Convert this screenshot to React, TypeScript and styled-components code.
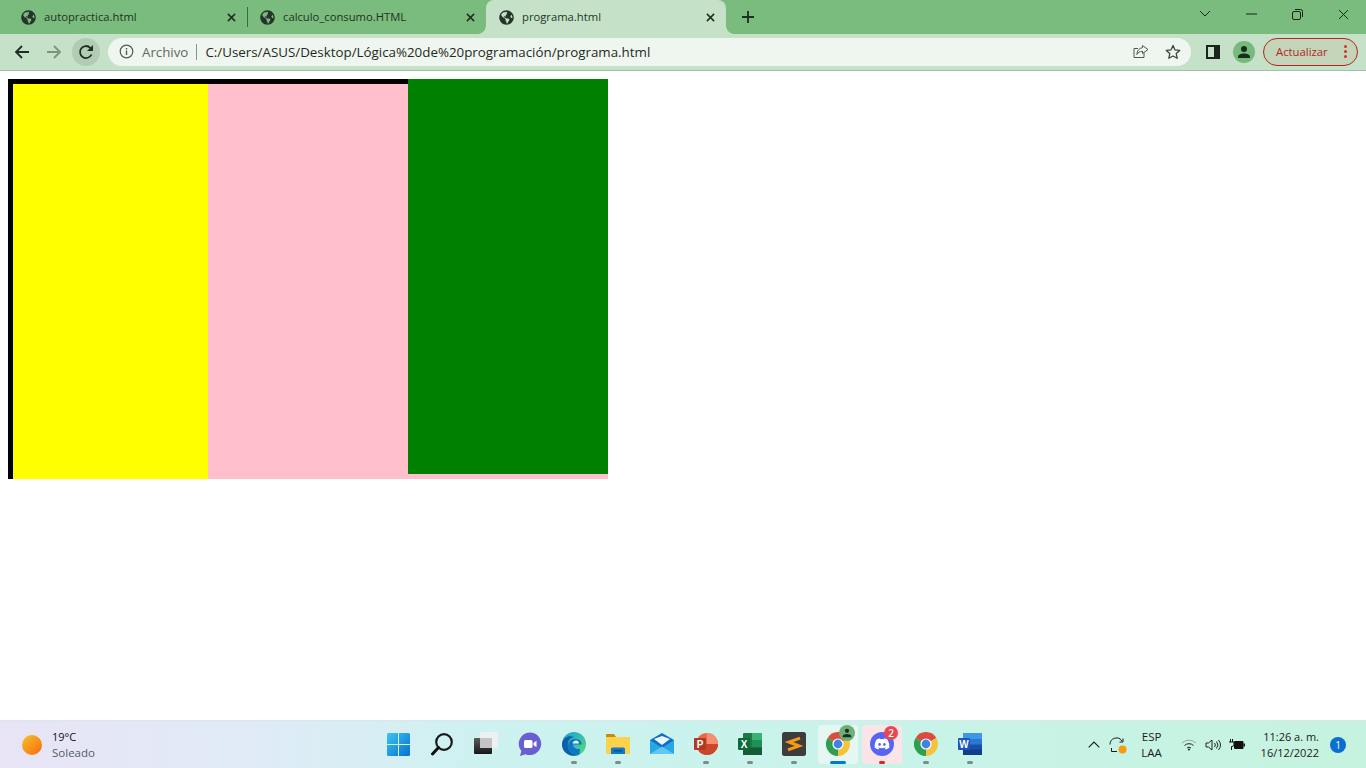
import React from 'react'
import styled, { createGlobalStyle } from 'styled-components'
import { FaDiscord, FaGlobeAmericas } from 'react-icons/fa'

const GlobalStyle = createGlobalStyle`
  html, body { margin: 0; padding: 0; height: 100%; overflow: hidden; background: #fff; }
  body { font-family: "Open Sans", "Noto Sans", sans-serif; }
`

const Screen = styled.div`
  display: flex;
  flex-direction: column;
  width: 1366px;
  height: 768px;
`

/* browser chrome */
const TabStrip = styled.div`
  display: flex;
  height: 34px;
  padding-left: 8px;
  background: #7abb7e;
  flex-shrink: 0;
`

const Tab = styled.div<{ $active?: boolean; $divider?: boolean }>`
  position: relative;
  display: flex;
  align-items: center;
  box-sizing: border-box;
  width: ${p => (p.$active ? 240 : 239)}px;
  padding: 0 11px 0 13px;
  color: ${p => (p.$active ? '#243527' : '#1f3322')};
  background: ${p => (p.$active ? '#c5e1c7' : 'transparent')};
  border-radius: ${p => (p.$active ? '8px 8px 0 0' : '0')};
  &::after {
    content: '';
    display: ${p => (p.$divider ? 'block' : 'none')};
    position: absolute;
    right: -1px;
    top: 7px;
    width: 1px;
    height: 20px;
    background: #40664a;
  }
`

const TabCorner = styled.span<{ $side: 'left' | 'right' }>`
  position: absolute;
  bottom: 0;
  ${p => p.$side}: -8px;
  width: 8px;
  height: 8px;
  background: radial-gradient(circle at ${p => (p.$side === 'left' ? '0 0' : '100% 0')}, #7abb7e 7.5px, #c5e1c7 8px);
`

const TabTitle = styled.span`
  flex: 1;
  margin: 0 0 1px 8px;
  font-size: 11.25px;
  white-space: nowrap;
`

const NewTab = styled.button`
  display: flex;
  align-items: center;
  justify-content: center;
  width: 28px;
  height: 28px;
  margin: 3px 0 0 8px;
  padding: 0;
  border: 0;
  background: none;
`

const WindowControls = styled.div`
  display: flex;
  margin-left: auto;
`

const WindowButton = styled.div`
  display: flex;
  align-items: center;
  justify-content: center;
  width: 46px;
  height: 28px;
`

const Toolbar = styled.div`
  display: flex;
  align-items: center;
  box-sizing: border-box;
  height: 37px;
  padding: 0 8px 1px;
  gap: 4px;
  background: #c5e1c7;
  border-bottom: 1px solid #a5bea7;
  flex-shrink: 0;
`

const NavButton = styled.div<{ $hover?: boolean }>`
  display: flex;
  align-items: center;
  justify-content: center;
  width: 28px;
  height: 28px;
  border-radius: 50%;
  background: ${p => (p.$hover ? '#b1ccb3' : 'transparent')};
`

const PanelButton = styled(NavButton)`
  margin-right: -1px;
`

const Omnibox = styled.div`
  display: flex;
  align-items: center;
  flex: 1;
  height: 28px;
  margin: 0 4px;
  padding: 0 2px 0 11px;
  border-radius: 14px;
  background: #eff6f0;
`

const Scheme = styled.span`
  margin-left: 8px;
  padding-right: 8px;
  border-right: 1px solid #8a948c;
  color: #5f6863;
  font-size: 13.3px;
  line-height: 16px;
`

const Address = styled.span`
  flex: 1;
  margin-left: 8px;
  color: #1f2a22;
  font-size: 13.35px;
  line-height: 16px;
  white-space: nowrap;
`

const OmniAction = styled.span`
  display: flex;
  justify-content: center;
  width: 32px;
`

const Avatar = styled.span`
  display: flex;
  align-items: center;
  justify-content: center;
  width: 22px;
  height: 22px;
  border-radius: 50%;
  background: #78b97e;
`

const UpdatePill = styled.div`
  display: flex;
  align-items: center;
  justify-content: space-between;
  box-sizing: border-box;
  width: 95px;
  height: 28px;
  margin-left: 1px;
  padding: 0 10px 0 12px;
  border: 1px solid #b3261e;
  border-radius: 14px;
  background: #c3d4b8;
  color: #b3261e;
  font-size: 11.3px;
`

const MenuDots = styled.span`
  display: flex;
  flex-direction: column;
  gap: 2px;
  span { width: 3px; height: 3px; border-radius: 50%; background: #d93025; }
`

/* page body */
const Viewport = styled.main`
  flex: 1;
  box-sizing: border-box;
  padding: 8px;
  background: #fff;
`

const Stage = styled.div`
  display: flex;
  width: 600px;
  height: 400px;
  background: pink;
`

const Frame = styled.div`
  display: flex;
  box-sizing: border-box;
  width: 400px;
  height: 400px;
  border-top: 5px solid #000;
  border-left: 5px solid #000;
`

const YellowBlock = styled.div`
  width: 195px;
  background: #ff0;
`

const PinkBlock = styled.div`
  width: 200px;
  background: pink;
`

const GreenBlock = styled.div`
  width: 200px;
  height: 395px;
  background: green;
`

/* windows taskbar */
const Taskbar = styled.footer`
  display: grid;
  grid-template-columns: 378px auto 1fr;
  height: 48px;
  box-sizing: border-box;
  border-top: 1px solid #dbe7ea;
  background: linear-gradient(90deg, #e8e4f5 0%, #e0eaf7 18%, #cdf2f0 36%, #c9f3ea 60%, #c6f3df 100%);
  flex-shrink: 0;
`

const Weather = styled.div`
  display: flex;
  align-items: center;
  padding-left: 22px;
`

const Sun = styled.span`
  width: 20px;
  height: 20px;
  border-radius: 50%;
  background: linear-gradient(135deg, #f7c02e, #f56b0a);
`

const WeatherText = styled.div`
  display: flex;
  flex-direction: column;
  margin-left: 10px;
  font-size: 11px;
  line-height: 16px;
  color: #111;
  small { font-size: 11.5px; color: #555c66; }
`

const Pinned = styled.div`
  display: flex;
  align-items: center;
  gap: 4px;
`

const Tile = styled.div<{ $tint?: string }>`
  position: relative;
  display: flex;
  align-items: center;
  justify-content: center;
  box-sizing: border-box;
  width: 40px;
  height: 39px;
  padding-bottom: 1px;
  border-radius: 4px;
  background: ${p => p.$tint || 'transparent'};
`

const RunDot = styled.span<{ $color?: string; $wide?: boolean }>`
  position: absolute;
  left: 50%;
  bottom: 0;
  width: ${p => (p.$wide ? 16 : 6)}px;
  height: 3px;
  margin-left: ${p => (p.$wide ? -8 : -3)}px;
  border-radius: 2px;
  background: ${p => p.$color || '#7c8a8b'};
`

const Badge = styled.span<{ $color: string }>`
  position: absolute;
  top: 1px;
  right: 4px;
  display: flex;
  align-items: center;
  justify-content: center;
  width: 14px;
  height: 14px;
  border-radius: 50%;
  background: ${p => p.$color};
  color: #fff;
  font-size: 10px;
  font-weight: 600;
`

const Tray = styled.div`
  display: flex;
  align-items: center;
  justify-content: flex-end;
  padding-right: 20px;
`

const TrayIcon = styled.span<{ $width: number }>`
  display: flex;
  justify-content: center;
  width: ${p => p.$width}px;
`

const Lang = styled.div`
  display: flex;
  flex-direction: column;
  align-items: center;
  width: 44px;
  margin-right: 3px;
  font-size: 11.5px;
  line-height: 16px;
  color: #1a1a1a;
`

const Clock = styled.div`
  display: flex;
  flex-direction: column;
  align-items: flex-end;
  margin-left: 12px;
  font-size: 11px;
  line-height: 16px;
  color: #1a1a1a;
  white-space: nowrap;
`

const Notification = styled.span`
  display: flex;
  align-items: center;
  justify-content: center;
  width: 16px;
  height: 16px;
  margin-left: 11px;
  border-radius: 50%;
  background: #0a6fd0;
  color: #fff;
  font-size: 10px;
`

/* icons */
const CloseGlyph = ({ size = 9, color = '#202d23', width = 1.7 }) => (
  <svg width={size} height={size} viewBox="0 0 10 10">
    <path d="M1 1l8 8M9 1L1 9" stroke={color} strokeWidth={width} fill="none" />
  </svg>
)

const ChromeLogo = () => (
  <svg width="24" height="24" viewBox="0 0 24 24">
    <path d="M12 12L1.6 6A12 12 0 0 1 22.39 6z" fill="#dc4c3e" />
    <path d="M12 12L22.39 6A12 12 0 0 1 12 24z" fill="#f5c33b" />
    <path d="M12 12L12 24A12 12 0 0 1 1.6 6z" fill="#2f9e50" />
    <circle cx="12" cy="12" r="5.6" fill="#fff" />
    <circle cx="12" cy="12" r="4.4" fill="#3f83e6" />
  </svg>
)

const StartIcon = () => (
  <svg width="23" height="23" viewBox="0 0 23 23">
    <defs>
      <linearGradient id="startFill" x1="0" y1="0" x2="1" y2="1">
        <stop offset="0" stopColor="#3cc4f5" />
        <stop offset="1" stopColor="#0670cf" />
      </linearGradient>
    </defs>
    <path d="M1.5 0H11v11H0V1.5A1.5 1.5 0 0 1 1.5 0zM12 0h9.5A1.5 1.5 0 0 1 23 1.5V11H12zM0 12h11v11H1.5A1.5 1.5 0 0 1 0 21.500zM12 12h11v9.500a1.500 1.500 0 0 1-1.500 1.500H12z" fill="url(#startFill)" />
  </svg>
)

const SearchIcon = () => (
  <svg width="24" height="24" viewBox="0 0 24 24" fill="none">
    <circle cx="14" cy="10" r="7.800" stroke="#1a1a1a" strokeWidth="2.200" />
    <path d="M8.500 15.500L2.500 22" stroke="#111" strokeWidth="3" strokeLinecap="round" />
  </svg>
)

const TaskViewIcon = () => (
  <svg width="24" height="24" viewBox="0 0 24 24">
    <defs>
      <linearGradient id="taskFront" x1="0" y1="0" x2="0" y2="1">
        <stop offset="0" stopColor="#5c5c5c" />
        <stop offset="1" stopColor="#161616" />
      </linearGradient>
    </defs>
    <rect x="6" y="0" width="18" height="16" rx="1" fill="#eef1f1" />
    <rect x="0" y="6" width="18" height="16" rx="1" fill="url(#taskFront)" />
    <rect x="6" y="6" width="12" height="10" fill="#c4c4c4" />
  </svg>
)

const ChatIcon = () => (
  <svg width="24" height="24" viewBox="0 0 24 24">
    <path d="M12 .5a11.300 11.300 0 1 1-4.500 21.700L2 24l1.400-5A11.300 11.300 0 0 1 12 .5z" fill="#6a5fd0" />
    <rect x="6" y="8" width="8.500" height="8" rx="1.500" fill="#fff" />
    <path d="M15.500 11l3-2.200v6.400l-3-2.200z" fill="#fff" />
  </svg>
)

const EdgeIcon = () => (
  <svg width="24" height="24" viewBox="0 0 24 24">
    <defs>
      <linearGradient id="edgeTop" x1="0" y1="0" x2="1" y2="1">
        <stop offset="0" stopColor="#1b9de2" />
        <stop offset="1" stopColor="#55df70" />
      </linearGradient>
    </defs>
    <circle cx="12" cy="12" r="12" fill="url(#edgeTop)" />
    <path d="M0 12C1 5 7 3 12 5c-5 1-7 5-6 10s5 9 12 7c-6 4-18 1-18-10z" fill="#0c5ea8" />
    <path d="M6 14c0-5 4-7.500 8-7s6 3 5.500 5.500H11c0 3 3 5 7 4.500l-.5 5C11 24 6 20 6 14z" fill="#0f76c6" />
    <path d="M10.500 11.500c.5-2 2-3 3.500-3s3 1 3 3z" fill="#e8f7f7" />
  </svg>
)

const FolderIcon = () => (
  <svg width="24" height="24" viewBox="0 0 24 24">
    <path d="M0 3a1 1 0 0 1 1-1h7l2 3H0z" fill="#c98a06" />
    <path d="M0 5h23a1 1 0 0 1 1 1v15a1 1 0 0 1-1 1H1a1 1 0 0 1-1-1z" fill="#fbd24e" />
    <path d="M5 22v-5a1.500 1.500 0 0 1 1.500-1.500h11A1.500 1.500 0 0 1 19 17v5z" fill="#0f78c8" />
    <rect x="8" y="18" width="8" height="1.500" fill="#0a4f91" />
  </svg>
)

const MailIcon = () => (
  <svg width="24" height="24" viewBox="0 0 24 24">
    <path d="M0 8L12 1l12 7v14H0z" fill="#0f6fc0" />
    <path d="M4 7l8-3 8 3-8 6z" fill="#eef7fb" />
    <path d="M0 8l12 8 12-8v14H0z" fill="#29a7e5" />
    <path d="M0 22l12-7.500L24 22z" fill="#62c6f2" />
  </svg>
)

const OfficeMark = ({ color }: { color: string }) => (
  <rect x="0" y="6" width="12" height="12" rx="1" fill={color} />
)

const OfficeLetter = ({ children }: { children: string }) => (
  <text x="6" y="16" textAnchor="middle" fontSize="10" fontWeight="700" fill="#fff" fontFamily="Liberation Sans, sans-serif">{children}</text>
)

const PowerPointIcon = () => (
  <svg width="24" height="24" viewBox="0 0 24 24">
    <circle cx="13" cy="12" r="11" fill="#e8694a" />
    <path d="M13 1a11 11 0 0 1 11 11H13z" fill="#f58f70" />
    <path d="M13 12h11a11 11 0 0 1-11 11 11 11 0 0 1-8-3.500V12z" fill="#c9472b" />
    <OfficeMark color="#b7371c" />
    <OfficeLetter>P</OfficeLetter>
  </svg>
)

const ExcelIcon = () => (
  <svg width="24" height="24" viewBox="0 0 24 24">
    <rect x="5" y="1" width="19" height="22" rx="1" fill="#1b7a47" />
    <rect x="14" y="1" width="10" height="7" fill="#36b374" />
    <rect x="14" y="8" width="10" height="7.500" fill="#1f9158" />
    <rect x="5" y="15.500" width="19" height="7.500" fill="#125c37" />
    <OfficeMark color="#0f6a3a" />
    <OfficeLetter>X</OfficeLetter>
  </svg>
)

const WordIcon = () => (
  <svg width="24" height="24" viewBox="0 0 24 24">
    <rect x="5" y="1" width="19" height="22" rx="1" fill="#1a4fa5" />
    <rect x="5" y="1" width="19" height="6" fill="#3f97e8" />
    <rect x="5" y="7" width="19" height="5.500" fill="#2a78d4" />
    <rect x="5" y="17.500" width="19" height="5.500" fill="#123d8c" />
    <OfficeMark color="#1b57b8" />
    <OfficeLetter>W</OfficeLetter>
  </svg>
)

const SublimeIcon = () => (
  <svg width="24" height="24" viewBox="0 0 24 24">
    <rect width="24" height="24" rx="2.500" fill="#3d3d3d" />
    <path d="M18 6.200L7 10l10 4-11 3.800" fill="none" stroke="#f79a13" strokeWidth="3" />
  </svg>
)

const PersonGlyph = ({ size = 14, color = '#16301d' }) => (
  <svg width={size} height={size} viewBox="0 0 14 14">
    <circle cx="7" cy="4" r="3" fill={color} />
    <path d="M1 13v-1.500C1 9.500 4.500 8.500 7 8.500s6 1 6 3V13z" fill={color} />
  </svg>
)

const ChromeProfile = styled.span`
  position: absolute;
  top: 0;
  right: 3px;
  display: flex;
  align-items: center;
  justify-content: center;
  width: 16px;
  height: 16px;
  border-radius: 50%;
  background: #6fae78;
`

const DiscordGlyph = styled(FaDiscord)`
  position: absolute;
`

const GlobeFavicon = () => <FaGlobeAmericas size={15} color="#26332a" />

const App: React.FC = () => {
  return (
    <Screen>
      <GlobalStyle />
      <TabStrip>
        <Tab $divider>
          <GlobeFavicon />
          <TabTitle>autopractica.html</TabTitle>
          <CloseGlyph />
        </Tab>
        <Tab>
          <GlobeFavicon />
          <TabTitle>calculo_consumo.HTML</TabTitle>
          <CloseGlyph />
        </Tab>
        <Tab $active>
          <TabCorner $side="left" />
          <GlobeFavicon />
          <TabTitle>programa.html</TabTitle>
          <CloseGlyph />
          <TabCorner $side="right" />
        </Tab>
        <NewTab>
          <svg width="12" height="12" viewBox="0 0 12 12">
            <path d="M6 0v12M0 6h12" stroke="#202d23" strokeWidth="1.800" />
          </svg>
        </NewTab>
        <WindowControls>
          <WindowButton>
            <svg width="12" height="8" viewBox="0 0 12 8" fill="none"><path d="M1 1l5 5 5-5" stroke="#17241a" strokeWidth="1" /></svg>
          </WindowButton>
          <WindowButton>
            <svg width="11" height="2" viewBox="0 0 11 2"><path d="M0 1h11" stroke="#17241a" strokeWidth="1" /></svg>
          </WindowButton>
          <WindowButton>
            <svg width="11" height="11" viewBox="0 0 11 11" fill="none">
              <rect x=".5" y="2.500" width="8" height="8" rx="1.500" stroke="#17241a" />
              <path d="M3 .5h5.500a2 2 0 0 1 2 2V8" stroke="#17241a" />
            </svg>
          </WindowButton>
          <WindowButton>
            <CloseGlyph size={11} color="#17241a" width={.9} />
          </WindowButton>
        </WindowControls>
      </TabStrip>

      <Toolbar>
        <NavButton>
          <svg width="16" height="16" viewBox="0 0 16 16" fill="none"><path d="M15 8H2M8 2L2 8l6 6" stroke="#1f2d23" strokeWidth="1.800" /></svg>
        </NavButton>
        <NavButton>
          <svg width="16" height="16" viewBox="0 0 16 16" fill="none"><path d="M1 8h13M8 2l6 6-6 6" stroke="#7f9282" strokeWidth="1.800" /></svg>
        </NavButton>
        <NavButton $hover>
          <svg width="16" height="16" viewBox="0 0 16 16" fill="none">
            <path d="M13.500 10.500A6 6 0 1 1 12.300 3.800L14 5.500" stroke="#1f2d23" strokeWidth="1.800" />
            <path d="M15 1v6H9z" fill="#1f2d23" />
          </svg>
        </NavButton>
        <Omnibox>
          <svg width="15" height="15" viewBox="0 0 15 15" fill="none">
            <circle cx="7.500" cy="7.500" r="6.300" stroke="#515c55" strokeWidth="1.200" />
            <path d="M7.500 6.500v4.500M7.500 4v1.400" stroke="#515c55" strokeWidth="1.400" />
          </svg>
          <Scheme>Archivo</Scheme>
          <Address>C:/Users/ASUS/Desktop/Lógica%20de%20programación/programa.html</Address>
          <OmniAction>
            <svg width="16" height="15" viewBox="0 0 16 15" fill="none">
              <path d="M11 8.500V13.500H1V4.500H5" stroke="#4f5a53" />
              <path d="M9.500 1.500L15 5.500 9.500 9.500V7.300C7 7.300 5 8.500 3.800 10.500 4 7 6 4 9.500 3.700z" stroke="#4f5a53" strokeLinejoin="round" />
            </svg>
          </OmniAction>
          <OmniAction>
            <svg width="16" height="16" viewBox="0 0 16 16" fill="none">
              <path d="M8 1.500l2 4.400 4.700.5-3.500 3.200 1 4.700L8 12l-4.200 2.300 1-4.700L1.300 6.400 6 5.900z" stroke="#3a443d" strokeWidth="1.300" strokeLinejoin="round" />
            </svg>
          </OmniAction>
        </Omnibox>
        <PanelButton>
          <svg width="14" height="14" viewBox="0 0 14 14" fill="none">
            <rect x="1" y="1" width="12" height="12" stroke="#1b241d" strokeWidth="2" />
            <rect x="8" y="1" width="5" height="12" fill="#1b241d" />
          </svg>
        </PanelButton>
        <NavButton>
          <Avatar><PersonGlyph /></Avatar>
        </NavButton>
        <UpdatePill>
          Actualizar
          <MenuDots><span /><span /><span /></MenuDots>
        </UpdatePill>
      </Toolbar>

      <Viewport>
        <Stage>
          <Frame>
            <YellowBlock />
            <PinkBlock />
          </Frame>
          <GreenBlock />
        </Stage>
      </Viewport>

      <Taskbar>
        <Weather>
          <Sun />
          <WeatherText>
            <span>19°C</span>
            <small>Soleado</small>
          </WeatherText>
        </Weather>
        <Pinned>
          <Tile><StartIcon /></Tile>
          <Tile><SearchIcon /></Tile>
          <Tile><TaskViewIcon /></Tile>
          <Tile><ChatIcon /></Tile>
          <Tile><EdgeIcon /><RunDot /></Tile>
          <Tile><FolderIcon /><RunDot /></Tile>
          <Tile><MailIcon /></Tile>
          <Tile><PowerPointIcon /><RunDot /></Tile>
          <Tile><ExcelIcon /><RunDot /></Tile>
          <Tile><SublimeIcon /><RunDot /></Tile>
          <Tile $tint="#e6f7f3">
            <ChromeLogo />
            <ChromeProfile><PersonGlyph size={10} /></ChromeProfile>
            <RunDot $wide $color="#0078d4" />
          </Tile>
          <Tile $tint="#fbe4e8">
            <svg width="24" height="24" viewBox="0 0 24 24"><circle cx="12" cy="12" r="12" fill="#5865f2" /></svg>
            <DiscordGlyph size={16} color="#fff" />
            <Badge $color="#e8484d">2</Badge>
            <RunDot $color="#d8232a" />
          </Tile>
          <Tile><ChromeLogo /><RunDot /></Tile>
          <Tile><WordIcon /><RunDot /></Tile>
        </Pinned>
        <Tray>
          <TrayIcon $width={24}>
            <svg width="12" height="7" viewBox="0 0 12 7" fill="none"><path d="M.7 6.300L6 1l5.300 5.300" stroke="#1a1a1a" strokeWidth="1.100" /></svg>
          </TrayIcon>
          <TrayIcon $width={24}>
            <svg width="18" height="18" viewBox="0 0 18 18" fill="none">
              <path d="M1 8.500A6.500 6.500 0 0 1 13 5M14 2.500V6h-3.500" stroke="#1a1a1a" strokeWidth="1" />
              <path d="M8 15.500H2.500V12" stroke="#1a1a1a" strokeWidth="1" />
              <circle cx="13.500" cy="13.500" r="4" fill="#f59b14" />
            </svg>
          </TrayIcon>
          <Lang>
            <span>ESP</span>
            <span>LAA</span>
          </Lang>
          <TrayIcon $width={24}>
            <svg width="16" height="13" viewBox="0 0 16 13" fill="none">
              <path d="M1 5a10 10 0 0 1 14 0" stroke="#9aa7a0" />
              <path d="M3.500 7.500a6.500 6.500 0 0 1 9 0M6 10a3 3 0 0 1 4 0" stroke="#222" />
              <circle cx="8" cy="11.500" r="1" fill="#222" />
            </svg>
          </TrayIcon>
          <TrayIcon $width={24}>
            <svg width="16" height="14" viewBox="0 0 16 14" fill="none">
              <path d="M1 5v4h2.500L7 12V2L3.500 5z" stroke="#222" strokeLinejoin="round" />
              <path d="M9.500 5a3 3 0 0 1 0 4M11.500 3.500a5.500 5.500 0 0 1 0 7M13.500 2a8 8 0 0 1 0 10" stroke="#222" />
            </svg>
          </TrayIcon>
          <TrayIcon $width={24}>
            <svg width="16" height="12" viewBox="0 0 16 12">
              <path d="M1.500 0v3M3.500 0v3M0 3h5v2.500a2 2 0 0 1-2 2H2.500V11" stroke="#111" fill="none" />
              <rect x="5" y="2" width="9.500" height="8" rx="1" fill="#111" />
              <rect x="14.500" y="4.500" width="1.500" height="3" fill="#111" />
            </svg>
          </TrayIcon>
          <Clock>
            <span>11:26 a. m.</span>
            <span>16/12/2022</span>
          </Clock>
          <Notification>1</Notification>
        </Tray>
      </Taskbar>
    </Screen>
  )
}

export default App
